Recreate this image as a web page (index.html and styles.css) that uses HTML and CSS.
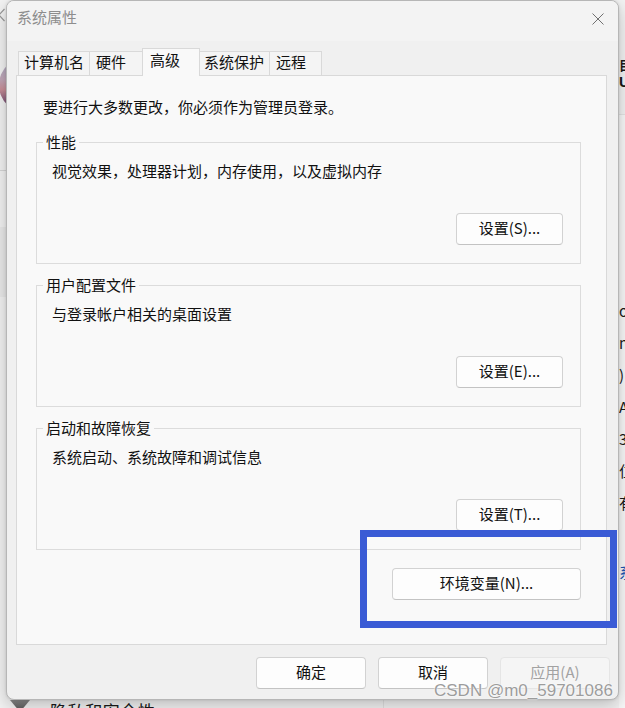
FILE: index.html
```html
<!DOCTYPE html>
<html lang="zh-CN">
<head>
<meta charset="utf-8">
<title>系统属性</title>
<link rel="stylesheet" href="styles.css">
</head>
<body>
<div class="desk">
  <div class="bg-side">
    <svg class="back" width="8" height="14" viewBox="0 0 8 14"><path d="M6.5 1 L1 7 L6.5 13" fill="none" stroke="#9a9a9a" stroke-width="1.2"/></svg>
    <div class="avatar"></div>
    <div class="side-line"></div>
    <div class="side-sel"></div>
    <div class="side-bottom">
      <span class="shield"></span>
      <span class="side-text">隐私和安全性</span>
    </div>
  </div>
  <div class="bg-main">
    <div class="main-head">目</div>
    <div class="main-head2">U</div>
    <div class="main-card">
      <div class="main-row">ot</div>
      <div class="main-row">n</div>
      <div class="main-row">)</div>
      <div class="main-row">AE</div>
      <div class="main-row">34</div>
      <div class="main-row">位</div>
      <div class="main-row">有</div>
      <div class="main-link">系</div>
    </div>
  </div>
</div>

<div class="dialog">
  <div class="titlebar">
    <span class="title">系统属性</span>
    <svg class="close" width="12" height="12" viewBox="0 0 12 12"><path d="M0.5 0.5 L11.5 11.5 M11.5 0.5 L0.5 11.5" stroke="#707070" stroke-width="1"/></svg>
  </div>
  <div class="tabs">
    <div class="tab t1">计算机名</div>
    <div class="tab t2">硬件</div>
    <div class="tab t3 active">高级</div>
    <div class="tab t4">系统保护</div>
    <div class="tab t5">远程</div>
  </div>
  <div class="panel">
    <div class="intro">要进行大多数更改，你必须作为管理员登录。</div>
    <div class="group">
      <span class="legend">性能</span>
      <div class="desc">视觉效果，处理器计划，内存使用，以及虚拟内存</div>
      <div class="btn-row"><div class="btn btn-set">设置(S)...</div></div>
    </div>
    <div class="group">
      <span class="legend">用户配置文件</span>
      <div class="desc">与登录帐户相关的桌面设置</div>
      <div class="btn-row"><div class="btn btn-set">设置(E)...</div></div>
    </div>
    <div class="group">
      <span class="legend">启动和故障恢复</span>
      <div class="desc">系统启动、系统故障和调试信息</div>
      <div class="btn-row"><div class="btn btn-set">设置(T)...</div></div>
    </div>
    <div class="env-row"><div class="btn btn-env">环境变量(N)...</div></div>
  </div>
  <div class="footer">
    <div class="btn btn-foot">确定</div>
    <div class="btn btn-foot">取消</div>
    <div class="btn btn-foot disabled">应用(A)</div>
  </div>
</div>

<div class="highlight"></div>
<div class="watermark">CSDN @m0_59701086</div>
</body>
</html>
```

FILE: styles.css
```css
* { box-sizing: border-box; }
html, body { margin: 0; padding: 0; }
body {
  width: 625px;
  height: 708px;
  overflow: hidden;
  position: relative;
  background: #f3f3f3;
  font-family: "Noto Sans CJK SC", "Microsoft YaHei", sans-serif;
  font-size: 15px;
  color: #111;
}

/* background settings window */
.desk {
  display: grid;
  grid-template-columns: 383px 1fr;
  height: 708px;
}
.bg-side {
  display: flex;
  flex-direction: column;
  padding-top: 8px;
}
.back { display: block; margin-left: -2px; }
.avatar {
  width: 56px;
  height: 56px;
  border-radius: 50%;
  margin-top: 35px;
  margin-left: -1px;
  background: linear-gradient(180deg, #a7adc6 0%, #c2a7b8 40%, #c98f98 58%, #8a5f7e 78%, #56405f 100%);
}
.side-line {
  height: 1px;
  background: #d6d6d6;
  margin-top: 57px;
}
.side-sel {
  height: 70px;
  margin-top: 56px;
  background: #eaeaea;
}
.side-bottom {
  margin-top: auto;
  margin-bottom: -20px;
  height: 28px;
  display: flex;
  align-items: flex-start;
  padding-left: 10px;
}
.shield {
  width: 20px;
  height: 12px;
  background: linear-gradient(180deg, #8a8a8a, #4e4e4e);
  clip-path: polygon(0 0, 100% 0, 50% 100%);
}
.side-text {
  margin-left: 20px;
  font-size: 17.5px;
  line-height: 22px;
  color: #1a1a1a;
}
.bg-main {
  border-left: 1px solid #e2e2e2;
  padding-left: 235px;
  display: flex;
  flex-direction: column;
  white-space: nowrap;
}
.main-head {
  margin-top: 57px;
  font-size: 13px;
  font-weight: 700;
  line-height: 16px;
  height: 17px;
  color: #1a1a1a;
}
.main-head2 {
  font-family: "Liberation Sans", Arial, sans-serif;
  font-size: 15px;
  font-weight: 700;
  line-height: 16px;
  height: 16px;
  color: #1a1a1a;
}
.main-card {
  margin-top: 24px;
  flex: 1;
  background: #f9f9f9;
  border-top: 1px solid #e5e5e5;
  padding-top: 180px;
}
.main-row {
  line-height: 32px;
  color: #1a1a1a;
  font-size: 15px;
}
.main-link {
  margin-top: 43px;
  line-height: 20px;
  color: #1b56b3;
  font-size: 15px;
}

/* dialog */
.dialog {
  position: absolute;
  left: 6px;
  top: 0;
  width: 613px;
  height: 700px;
  background: #f0f0f0;
  border: 1px solid #b6b6b6;
  border-radius: 8px;
  box-shadow: 0 6px 18px rgba(0, 0, 0, 0.22), 0 0 3px rgba(0, 0, 0, 0.12);
  display: flex;
  flex-direction: column;
}
.titlebar {
  height: 40px;
  display: flex;
  align-items: flex-start;
  padding: 6px 14px 0 10px;
  background: #f3f3f3;
  border-radius: 7px 7px 0 0;
}
.title {
  line-height: 20px;
  color: #8d8d8d;
}
.close {
  margin-left: auto;
  margin-top: 6px;
  display: block;
}
.tabs {
  display: flex;
  align-items: flex-end;
  height: 28px;
  margin: 7px 0 -1px 11px;
  position: relative;
  z-index: 1;
}
.tab {
  height: 24px;
  margin-bottom: 1px;
  border: 1px solid #d9d9d9;
  border-bottom: none;
  background: #f4f4f4;
  padding-left: 6px;
  line-height: 20px;
  white-space: nowrap;
}
.tab + .tab { margin-left: -1px; }
.t1 { width: 72px; padding-left: 5px; }
.t2 { width: 54px; }
.t3 { width: 58px; padding-left: 7px; }
.t4 { width: 71px; padding-left: 4px; }
.t5 { width: 53px; }
.tab.active {
  height: 28px;
  margin-bottom: 0;
  background: #f9f9f9;
  line-height: 22px;
  position: relative;
  z-index: 2;
}
.panel {
  margin: 0 11px 0 9px;
  height: 570px;
  border: 1px solid #d9d9d9;
  background: #f9f9f9;
  padding: 21px 25px 0 19px;
  display: flex;
  flex-direction: column;
}
.intro {
  line-height: 20px;
  padding-left: 7px;
}
.group {
  margin-top: 21px;
  height: 122px;
  border: 1px solid #dcdcdc;
  display: flex;
  flex-direction: column;
}
.intro + .group { margin-top: 25px; }
.legend {
  align-self: flex-start;
  margin: -11px 0 0 6px;
  padding: 0 3px;
  line-height: 20px;
  background: #f9f9f9;
}
.desc {
  margin: 9px 0 0 15px;
  line-height: 20px;
}
.btn-row {
  margin-top: 32px;
  display: flex;
  justify-content: flex-end;
  padding-right: 17px;
}
.btn {
  height: 32px;
  background: #fdfdfd;
  border: 1px solid #d2d2d2;
  border-bottom-color: #c3c3c3;
  border-radius: 4px;
  line-height: 28px;
  text-align: center;
  color: #111;
  white-space: nowrap;
}
.btn-set { width: 107px; }
.env-row {
  margin-top: 18px;
  display: flex;
  justify-content: flex-end;
}
.btn-env { width: 189px; }
.footer {
  margin-top: 12px;
  display: flex;
  justify-content: flex-end;
  gap: 12px;
  padding-right: 8px;
}
.btn-foot { width: 110px; }
.btn.disabled {
  background: #f5f5f5;
  border-color: #e5e5e5;
  color: #a2a2a2;
}

/* overlays */
.highlight {
  position: absolute;
  left: 360px;
  top: 530px;
  width: 257px;
  height: 98px;
  border: 7px solid #3a5bd5;
}
.watermark {
  position: absolute;
  left: 434px;
  top: 682px;
  font-family: "Liberation Sans", Arial, sans-serif;
  font-size: 17px;
  line-height: 17px;
  color: #9c9c9c;
  text-shadow: 0 0 2px #ffffff, 0 0 1px #ffffff;
  white-space: nowrap;
}
```
